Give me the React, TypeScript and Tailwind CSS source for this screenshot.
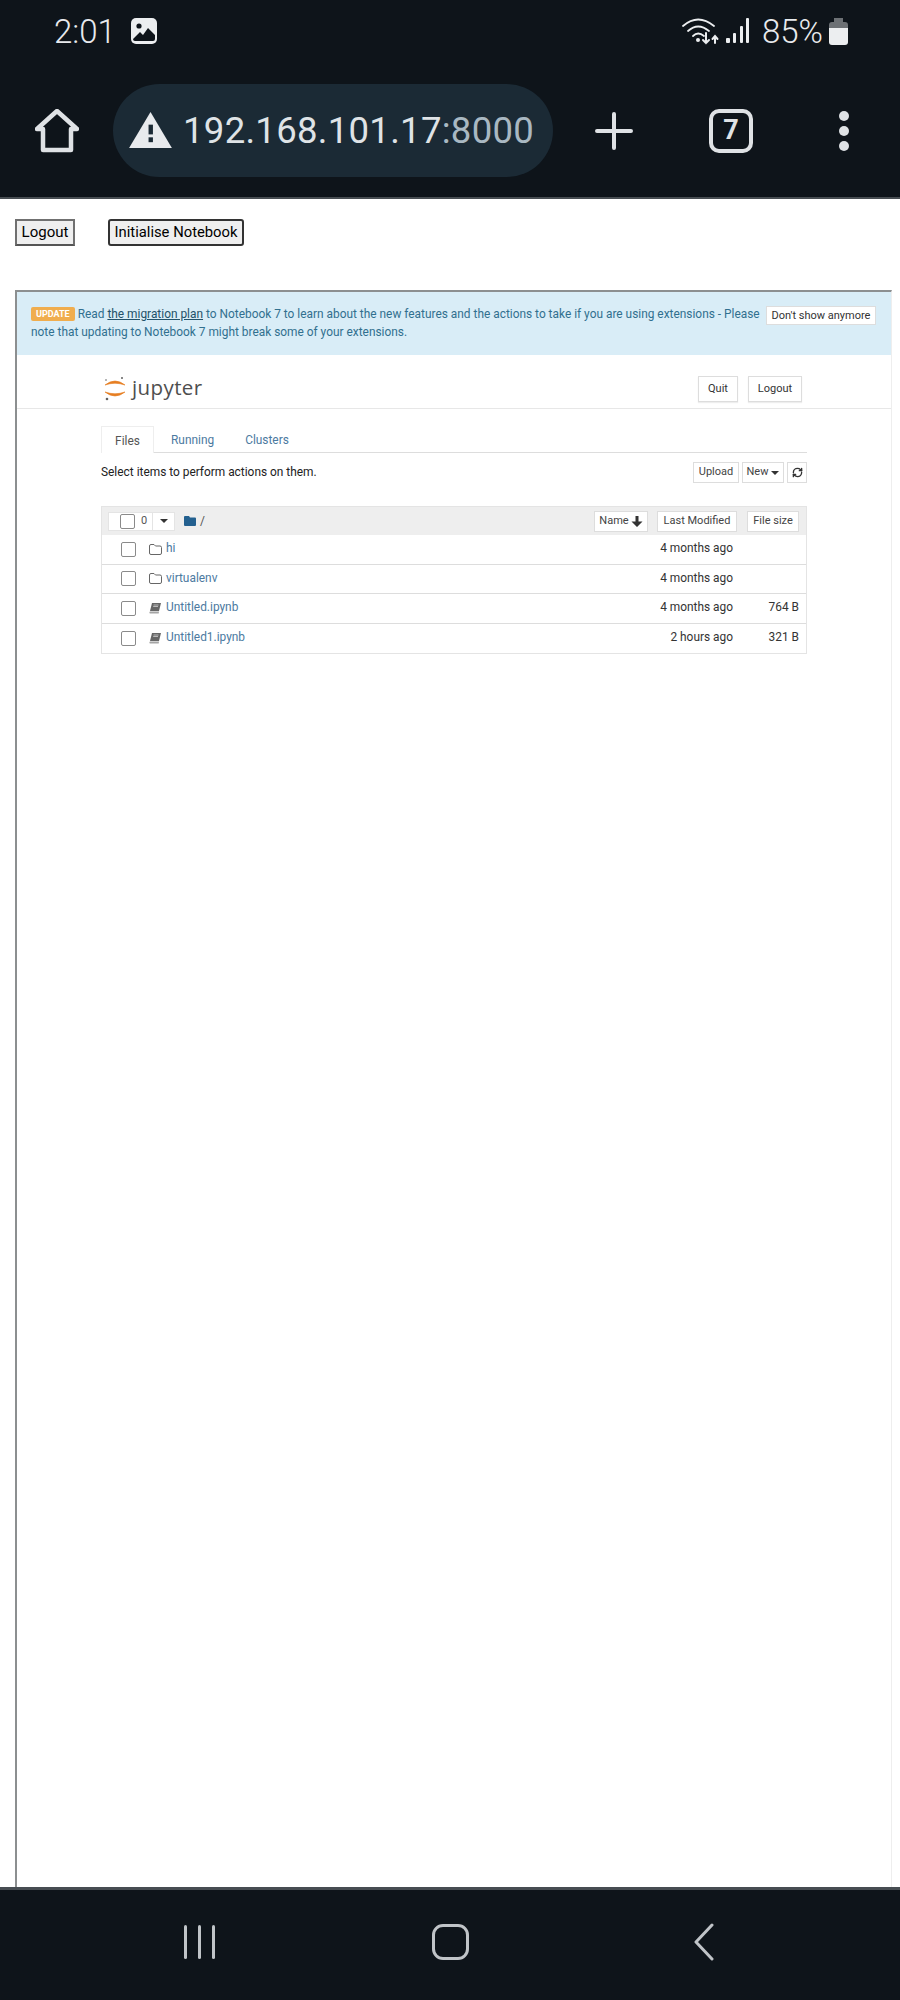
import React from 'react';
import { RefreshCw } from 'lucide-react';

const files = [
  { name: 'hi', kind: 'folder', modified: '4 months ago', size: '' },
  { name: 'virtualenv', kind: 'folder', modified: '4 months ago', size: '' },
  { name: 'Untitled.ipynb', kind: 'notebook', modified: '4 months ago', size: '764 B' },
  { name: 'Untitled1.ipynb', kind: 'notebook', modified: '2 hours ago', size: '321 B' },
];

function StatusBar() {
  return (
    <div className="flex items-center justify-between h-[62px] pl-[54px] pr-[52px] text-[#e8eaed]">
      <div className="flex items-center gap-[15px]">
        <span className="text-[33px] leading-none font-light">2:01</span>
        <svg width="26" height="26" viewBox="0 0 26 26">
          <rect width="26" height="26" rx="5" fill="#eceef0" />
          <circle cx="8" cy="8" r="2.600" fill="#0e141a" />
          <path d="M2 21 L9 14 L12 17 L17 10 L24 17 V21 Q24 23 22 23 H4 Q2 23 2 21 Z" fill="#0e141a" />
        </svg>
      </div>
      <div className="flex items-center">
        <svg width="38" height="30" viewBox="0 0 38 30" className="mr-[6px]" fill="none" stroke="#eceef0" strokeLinecap="round">
          <path d="M1 10 Q16 -3 32 10" strokeWidth="1.800" />
          <path d="M6 15 Q16 6 27 15" strokeWidth="1.800" />
          <path d="M11 20 Q16 15 22 20" strokeWidth="1.800" />
          <circle cx="16" cy="24" r="2" fill="#eceef0" stroke="none" />
          <path d="M24 17 V27 M21 24 L24 27 L27 24" strokeWidth="2" />
          <path d="M33 27 V20 M30.500 23 L33 20 L35.500 23" strokeWidth="2" />
        </svg>
        <svg width="24" height="26" viewBox="0 0 24 26" className="mr-[12px]" fill="#eceef0">
          <rect x="0" y="20" width="4" height="5" rx="1" />
          <rect x="7" y="15" width="3" height="10" rx="1" />
          <rect x="14" y="8" width="3" height="17" rx="1" />
          <rect x="20" y="0" width="3" height="25" rx="1" />
        </svg>
        <span className="text-[33px] leading-none font-light">85%</span>
        <svg width="19" height="27" viewBox="0 0 19 27" className="ml-[6px]">
          <path d="M5 0 H14 V4 H16 Q19 4 19 7 V10 H0 V7 Q0 4 3 4 H5 Z" fill="#6d7175" />
          <path d="M0 10 H19 V24 Q19 27 16 27 H3 Q0 27 0 24 Z" fill="#eceef0" />
        </svg>
      </div>
    </div>
  );
}

function BrowserBar() {
  return (
    <div className="flex items-center h-[93px] mt-[22px] pl-[35px]">
      <svg width="44" height="44" viewBox="0 0 44 44" fill="none" stroke="#dfe2e5" strokeWidth="4.500" strokeLinejoin="round" strokeLinecap="round">
        <path d="M2 20 L22 2 L42 20 H36 V41 H8 V20 Z" />
      </svg>
      <div className="flex items-center w-[440px] h-[93px] ml-[34px] pl-[16px] rounded-full bg-[#1b2a35]">
        <svg width="43" height="37" viewBox="0 0 44 38" fill="#e8eaed">
          <path d="M22 0 L44 37 H0 Z" />
          <rect x="20" y="13" width="4.500" height="10" fill="#1b2a35" />
          <rect x="20" y="26" width="4.500" height="5" fill="#1b2a35" />
        </svg>
        <span className="ml-[11px] mt-[1px] text-[36.500px] leading-none tracking-[0.3px] text-[#dfe3e6]">
          192.168.101.17<span className="text-[#a9b8c2]">:8000</span>
        </span>
      </div>
      <svg width="38" height="38" viewBox="0 0 38 38" className="ml-[42px]" fill="none" stroke="#dfe2e5" strokeWidth="4" strokeLinecap="round">
        <path d="M19 2 V36 M2 19 H36" />
      </svg>
      <div className="flex items-center justify-center w-[44px] h-[44px] ml-[76px] rounded-[10px] border-[4px] border-[#dfe2e5] text-[27px] font-bold leading-none text-[#dfe2e5]">
        7
      </div>
      <div className="flex flex-col gap-[5px] ml-[86px]">
        <div className="w-[10px] h-[10px] rounded-full bg-[#dfe2e5]" />
        <div className="w-[10px] h-[10px] rounded-full bg-[#dfe2e5]" />
        <div className="w-[10px] h-[10px] rounded-full bg-[#dfe2e5]" />
      </div>
    </div>
  );
}

function Checkbox() {
  return <div className="w-[15px] h-[15px] rounded-[2px] border border-[#8a8a8a] bg-white" />;
}

function Caret() {
  return <span className="inline-block w-0 h-0 border-x-[4px] border-x-transparent border-t-[4px] border-t-[#333]" />;
}

function FolderIcon() {
  return (
    <svg width="13" height="11" viewBox="0 0 13 11" fill="none" stroke="#666" strokeWidth="1">
      <path d="M2 .5 H5 L6.500 2 H11 Q12.500 2 12.500 3.500 V9 Q12.500 10.500 11 10.500 H2 Q.5 10.500 .5 9 V2 Q.5 .5 2 .5 Z" />
    </svg>
  );
}

function NotebookIcon() {
  return (
    <svg width="13" height="11" viewBox="0 0 13 11">
      <path d="M3 0 H12 L10 8 H1 Z" fill="#666" />
      <path d="M1 8.500 H10 L9.700 10.500 H1 Q0 10 .5 9 Z" fill="#a5a5a5" />
      <path d="M4.500 2 H9.500 M4.200 3.500 H9" stroke="#ddd" strokeWidth=".7" />
    </svg>
  );
}

function ToolButton({ children, className = '' }: { children: React.ReactNode; className?: string }) {
  return (
    <div className={`flex items-center justify-center h-[21px] border border-[#dddddd] bg-white text-[11px] text-[#444] ${className}`}>
      {children}
    </div>
  );
}

function FileRow({ file }: { file: (typeof files)[number] }) {
  return (
    <div className="flex items-center h-[29.500px] border-b last:border-b-0 border-[#dddddd] text-[11.900px]">
      <div className="ml-[19px]">
        <Checkbox />
      </div>
      <div className="ml-[13px] w-[17px] flex">
        {file.kind === 'folder' ? <FolderIcon /> : <NotebookIcon />}
      </div>
      <span className="text-[#4c7a9f]">{file.name}</span>
      <span className="ml-auto text-[#333]">{file.modified}</span>
      <span className="w-[73px] pr-[7px] text-right text-[#333]">{file.size}</span>
    </div>
  );
}

function Notebook() {
  return (
    <div className="flex-1 ml-[15px] mr-[8px] border-t-[2px] border-l-[2px] border-t-[#8c8f90] border-l-[#8c8f90] border-r border-r-[#eeeeee]">
      <div className="flex items-start h-[63px] pl-[14px] pr-[15px] pt-[13px] bg-[#d9edf7] text-[11.900px] leading-[18px] text-[#31708f]">
        <div className="flex-1 whitespace-nowrap">
          <div className="flex items-center">
            <span className="px-[5px] mr-[3px] rounded-[2px] bg-[#f0ad4e] text-[9px] font-bold leading-[14px] text-white">UPDATE</span>
            <span>Read&nbsp;</span>
            <span className="underline text-[#245269]">the migration plan</span>
            <span>&nbsp;to Notebook 7 to learn about the new features and the actions to take if you are using extensions - Please</span>
          </div>
          <div>note that updating to Notebook 7 might break some of your extensions.</div>
        </div>
        <div className="flex items-center justify-center w-[110px] h-[19px] mt-[1px] border border-[#dddddd] bg-white text-[11px] text-[#333]">
          Don't show anymore
        </div>
      </div>
      <div className="flex items-center h-[54px] pt-[12px] pl-[86px] pr-[89px] border-b border-[#e7e7e7]">
        <svg width="24" height="26" viewBox="0 0 24 26" fill="none">
          <path d="M2 10 Q12 2 22 10 Q12 6.500 2 10 Z" fill="#e67e22" stroke="#e67e22" strokeWidth=".6" />
          <path d="M2 17 Q12 25 22 17 Q12 20.500 2 17 Z" fill="#e67e22" stroke="#e67e22" strokeWidth=".6" />
          <circle cx="19" cy="3" r="1" fill="#616161" />
          <circle cx="3" cy="5" r="1" fill="#9e9e9e" />
          <circle cx="4" cy="24" r="1.300" fill="#616161" />
        </svg>
        <span className="ml-[5px] text-[20.500px] leading-none tracking-[0.4px] text-[#4e4e4e] font-['Open_Sans',sans-serif]">jupyter</span>
        <div className="flex items-center justify-center w-[40px] h-[26px] ml-auto mt-[3px] border border-[#dddddd] text-[11px] text-[#333] shadow-[0_1px_1px_#eee]">Quit</div>
        <div className="flex items-center justify-center w-[54px] h-[26px] ml-[10px] mt-[3px] border border-[#dddddd] text-[11px] text-[#333] shadow-[0_1px_1px_#eee]">Logout</div>
      </div>
      <div className="w-[706px] ml-[84px]">
        <div className="flex h-[27px] mt-[17px] border-b border-[#dddddd] text-[11.900px]">
          <div className="flex items-center justify-center w-[53px] h-[27px] pt-[3px] border border-b-0 border-[#eeeeee] bg-white text-[#555]">Files</div>
          <div className="flex items-center ml-[17px] pt-[3px] text-[#4c7a9f]">Running</div>
          <div className="flex items-center ml-[31px] pt-[3px] text-[#4c7a9f]">Clusters</div>
        </div>
        <div className="flex items-center h-[23px] mt-[8px] text-[11.900px] text-[#222]">
          <span>Select items to perform actions on them.</span>
          <ToolButton className="ml-auto w-[46px]">Upload</ToolButton>
          <ToolButton className="ml-[3px] w-[42px]">New<span className="ml-[3px] flex"><Caret /></span></ToolButton>
          <ToolButton className="ml-[3px] w-[20px]"><RefreshCw size={11} strokeWidth={3} color="#333" /></ToolButton>
        </div>
        <div className="mt-[22px] border border-[#e4e4e4]">
          <div className="flex items-center h-[28px] pl-[6px] pr-[7px] bg-[#eeeeee]">
            <div className="flex items-center w-[67px] h-[19px] bg-white border border-[#e4e4e4] text-[11px] text-[#555]">
              <div className="ml-[11px]"><Checkbox /></div>
              <span className="ml-[6px]">0</span>
              <span className="flex items-center justify-center ml-auto w-[22px] h-[17px] border-l border-[#e4e4e4]"><Caret /></span>
            </div>
            <svg width="12" height="10" viewBox="0 0 12 10" className="ml-[9px]">
              <path d="M1 0 H5 L6 1.500 H11 Q12 1.500 12 2.500 V9 Q12 10 11 10 H1 Q0 10 0 9 V1 Q0 0 1 0 Z" fill="#23608f" />
            </svg>
            <span className="ml-[4px] text-[12px] text-[#555]">/</span>
            <ToolButton className="ml-auto w-[54px] h-[19px]">
              Name
              <svg width="12" height="11" viewBox="0 0 12 11" className="ml-[2px]">
                <path d="M4.500 0 H7.500 V5.500 H11.500 L6 11 L.5 5.500 H4.500 Z" fill="#333" />
              </svg>
            </ToolButton>
            <ToolButton className="ml-[9px] w-[80px] h-[19px]">Last Modified</ToolButton>
            <ToolButton className="ml-[10px] w-[52px] h-[19px]">File size</ToolButton>
          </div>
          {files.map(f => <FileRow key={f.name} file={f} />)}
        </div>
      </div>
    </div>
  );
}

function NavBar() {
  return (
    <div className="flex items-center h-[113px] pb-[6px] border-t-[3px] border-[#474d52] bg-[#0e141a]">
      <div className="flex gap-[11px] ml-[184px]">
        <div className="w-[3px] h-[34px] rounded-full bg-[#c0c4c8]" />
        <div className="w-[3px] h-[34px] rounded-full bg-[#c0c4c8]" />
        <div className="w-[3px] h-[34px] rounded-full bg-[#c0c4c8]" />
      </div>
      <div className="w-[37px] h-[36px] ml-[217px] rounded-[11px] border-[3px] border-[#c0c4c8]" />
      <svg width="20" height="38" viewBox="0 0 20 38" className="ml-[225px]" fill="none" stroke="#c0c4c8" strokeWidth="3" strokeLinecap="round" strokeLinejoin="round">
        <path d="M18 2 L2 19 L18 36" />
      </svg>
    </div>
  );
}

export default function App() {
  return (
    <div className="flex flex-col w-[900px] h-[2000px] bg-white font-['Roboto',sans-serif]">
      <div className="h-[199px] bg-[#0e141a] border-b-[2px] border-[#474d52]">
        <StatusBar />
        <BrowserBar />
      </div>
      <div className="flex h-[91px] pt-[20px] items-start text-[15px] text-black">
        <button className="ml-[15px] w-[60px] h-[27px] border-2 border-[#707070] border-b-[#555] bg-[#efefef] font-['Roboto',sans-serif]">Logout</button>
        <button className="ml-[33px] w-[136px] h-[27px] border-2 border-[#333] rounded-[3px] bg-[#efefef] text-[14.800px] font-['Roboto',sans-serif]">Initialise Notebook</button>
      </div>
      <Notebook />
      <NavBar />
    </div>
  );
}
